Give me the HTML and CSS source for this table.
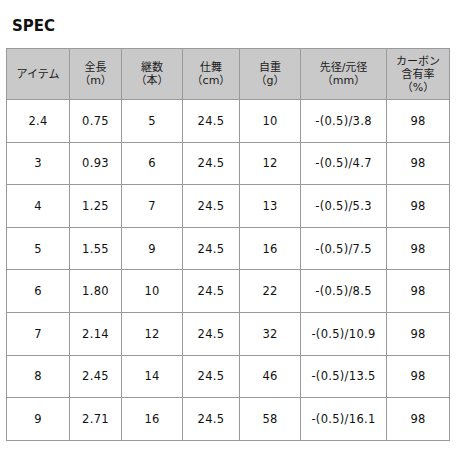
FILE: index.html
```html
<!DOCTYPE html>
<html lang="ja">
<head>
<meta charset="utf-8">
<link rel="stylesheet" href="styles.css">
</head>
<body>
<div class="page">
  <h2 class="title">SPEC</h2>
  <table class="spec">
    <colgroup>
      <col class="c1"><col class="c2"><col class="c3"><col class="c4"><col class="c5"><col class="c6"><col class="c7">
    </colgroup>
    <thead>
      <tr>
        <th>アイテム</th>
        <th>全長<br>（m）</th>
        <th>継数<br>（本）</th>
        <th>仕舞<br>（cm）</th>
        <th>自重<br>（g）</th>
        <th>先径/元径<br>（mm）</th>
        <th>カーボン<br>含有率<br>（%）</th>
      </tr>
    </thead>
    <tbody>
      <tr><td>2.4</td><td>0.75</td><td>5</td><td>24.5</td><td>10</td><td>-(0.5)/3.8</td><td>98</td></tr>
      <tr><td>3</td><td>0.93</td><td>6</td><td>24.5</td><td>12</td><td>-(0.5)/4.7</td><td>98</td></tr>
      <tr><td>4</td><td>1.25</td><td>7</td><td>24.5</td><td>13</td><td>-(0.5)/5.3</td><td>98</td></tr>
      <tr><td>5</td><td>1.55</td><td>9</td><td>24.5</td><td>16</td><td>-(0.5)/7.5</td><td>98</td></tr>
      <tr><td>6</td><td>1.80</td><td>10</td><td>24.5</td><td>22</td><td>-(0.5)/8.5</td><td>98</td></tr>
      <tr><td>7</td><td>2.14</td><td>12</td><td>24.5</td><td>32</td><td>-(0.5)/10.9</td><td>98</td></tr>
      <tr><td>8</td><td>2.45</td><td>14</td><td>24.5</td><td>46</td><td>-(0.5)/13.5</td><td>98</td></tr>
      <tr><td>9</td><td>2.71</td><td>16</td><td>24.5</td><td>58</td><td>-(0.5)/16.1</td><td>98</td></tr>
    </tbody>
  </table>
</div>
</body>
</html>
```
FILE: styles.css
```css
html, body {
  margin: 0;
  padding: 0;
  background: #fff;
}
body {
  font-family: "DejaVu Sans", "Noto Sans CJK JP", sans-serif;
  color: #111;
}
.page {
  padding: 0 6px;
}
.title {
  margin: 0;
  padding: 17px 0 0 6px;
  height: 48px;
  box-sizing: border-box;
  font-size: 15px;
  font-weight: bold;
  line-height: 18px;
  color: #111;
}
.spec {
  border-collapse: collapse;
  table-layout: fixed;
  width: 443px;
}
.c1 { width: 63px; }
.c2 { width: 52px; }
.c3 { width: 61px; }
.c4 { width: 57px; }
.c5 { width: 61px; }
.c6 { width: 86px; }
.c7 { width: 63px; }
.spec th, .spec td {
  border: 1px solid #9a9a9a;
  text-align: center;
  vertical-align: middle;
  padding: 0;
}
.spec th {
  background: #c9c9c9;
  font-weight: normal;
  font-size: 11px;
  line-height: 13px;
  height: 50px;
  color: #1a1a1a;
}
.spec td {
  font-size: 11.5px;
  letter-spacing: 0.3px;
  height: 41.6px;
  color: #111;
}
```
